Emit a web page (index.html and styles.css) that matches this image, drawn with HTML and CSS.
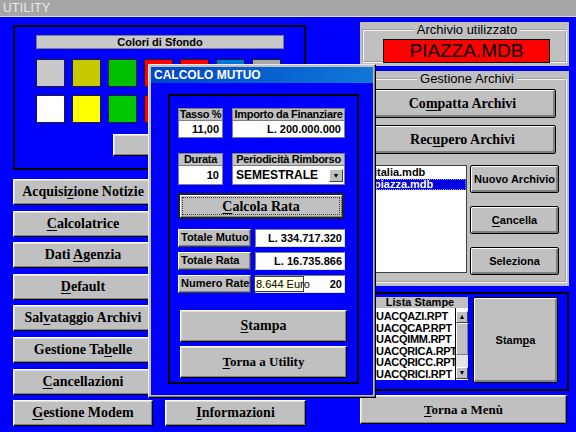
FILE: index.html
```html
<!DOCTYPE html>
<html lang="it">

<head>
   <meta charset="UTF-8">
   <title>Utility</title>
   <link rel="stylesheet" href="styles.css">
</head>

<body>
   <div class="titlebar">UTILITY</div>

   <div class="screen">
      <div class="left">
         <section class="colors">
            <div class="colors-head">Colori di Sfondo</div>
            <div class="swatches">
               <span class="swatch" style="background:#c8c8c8"></span>
               <span class="swatch" style="background:#c8c800"></span>
               <span class="swatch" style="background:#00c000"></span>
               <span class="swatch" style="background:#ff0000"></span>
               <span class="swatch" style="background:#ff0000"></span>
               <span class="swatch" style="background:#0078d8"></span>
               <span class="swatch" style="background:#a8a8a8"></span>
               <span class="swatch" style="background:#ffffff"></span>
               <span class="swatch" style="background:#ffff00"></span>
               <span class="swatch" style="background:#00c800"></span>
               <span class="swatch" style="background:#ff0000"></span>
               <span class="swatch" style="background:#ff00ff"></span>
               <span class="swatch" style="background:#00ffff"></span>
               <span class="swatch" style="background:#808080"></span>
            </div>
            <button class="btn colors-ok"></button>
         </section>

         <div class="menu">
            <button class="btn serif">Acquisi<u>z</u>ione Notizie</button>
            <button class="btn serif menu-c1"><u>C</u>alcolatrice</button>
            <button class="btn serif menu-c1">Dati <u>A</u>genzia</button>
            <button class="btn serif menu-c1"><u>D</u>efault</button>
            <button class="btn serif menu-c1">Sal<u>v</u>ataggio Archivi</button>
            <button class="btn serif menu-c1">Gestione Ta<u>b</u>elle</button>
            <button class="btn serif menu-c1"><u>C</u>ancellazioni</button>
            <button class="btn serif menu-c1"><u>G</u>estione Modem</button>
            <button class="btn serif info"><u>I</u>nformazioni</button>
         </div>
      </div>

      <div class="right">
         <div class="panel current">
            <fieldset class="group">
               <legend>Archivio utilizzato</legend>
               <div class="current-file">PIAZZA.MDB</div>
            </fieldset>
         </div>

         <div class="panel archives">
            <fieldset class="group">
               <legend>Gestione Archivi</legend>
               <button class="btn win serif wide">Co<u>m</u>patta Archivi</button>
               <button class="btn win serif wide second">Rec<u>u</u>pero Archivi</button>
               <div class="archive-row">
                  <ul class="listbox files">
                     <li>italia.mdb</li>
                     <li class="selected">piazza.mdb</li>
                  </ul>
                  <div class="archive-btns">
                     <button class="btn win small">Nuovo Archivio</button>
                     <button class="btn win small"><u>C</u>ancella</button>
                     <button class="btn win small">Seleziona</button>
                  </div>
               </div>
            </fieldset>
         </div>

         <div class="reports">
            <div class="reports-list">
               <div class="reports-head">Lista Stampe</div>
               <div class="reports-body">
                  <ul class="listbox items">
                     <li>UACQAZI.RPT</li>
                     <li>UACQCAP.RPT</li>
                     <li>UACQIMM.RPT</li>
                     <li>UACQRICA.RPT</li>
                     <li>UACQRICC.RPT</li>
                     <li>UACQRICI.RPT</li>
                  </ul>
                  <div class="scrollbar">
                     <span class="arrow">&#9650;</span>
                     <span class="thumb"></span>
                     <span class="track"></span>
                     <span class="arrow">&#9660;</span>
                  </div>
               </div>
            </div>
            <button class="btn win small print">Stam<u>p</u>a</button>
         </div>

         <button class="btn serif back"><u>T</u>orna a Menù</button>
      </div>
   </div>

   <div class="dialog">
      <div class="dialog-title">CALCOLO MUTUO</div>
      <div class="dialog-body">
         <div class="calc">
            <div class="calc-row">
               <div class="field w-small">
                  <div class="field-label">Tasso %</div>
                  <div class="field-value">11,00</div>
               </div>
               <div class="field w-big">
                  <div class="field-label">Importo da Finanziare</div>
                  <div class="field-value">L. 200.000.000</div>
               </div>
            </div>
            <div class="calc-row row2">
               <div class="field w-small">
                  <div class="field-label">Durata</div>
                  <div class="field-value tall">10</div>
               </div>
               <div class="field w-big">
                  <div class="field-label">Periodicità Rimborso</div>
                  <div class="field-value tall combo">
                     <span>SEMESTRALE</span>
                     <span class="drop">&#9660;</span>
                  </div>
               </div>
            </div>
            <button class="btn serif default"><span class="focus"><u>C</u>alcola Rata</span></button>

            <div class="result first">
               <div class="result-label">Totale Mutuo</div>
               <div class="result-value">L. 334.717.320</div>
            </div>
            <div class="result">
               <div class="result-label">Totale Rata</div>
               <div class="result-value">L. 16.735.866</div>
            </div>
            <div class="result">
               <div class="result-label">Numero Rate</div>
               <div class="result-value numero">20
                  <span class="tooltip">8.644 Euro</span>
               </div>
            </div>

            <button class="btn serif big first-big"><u>S</u>tampa</button>
            <button class="btn serif big torna"><u>T</u>orna a Utility</button>
         </div>
      </div>
   </div>
</body>

</html>
```

FILE: styles.css
```css
* {
   margin: 0;
   padding: 0;
   box-sizing: border-box;
}

body {
   width: 576px;
   height: 432px;
   overflow: hidden;
   position: relative;
   background: #0000ff;
   font-family: "Liberation Sans", Arial, sans-serif;
   color: #000;
}

ul {
   list-style: none;
}

.titlebar {
   height: 17px;
   background: #a6a6a6;
   border-bottom: 1px solid #dcdcdc;
   color: #ececec;
   font-size: 12px;
   line-height: 16px;
   padding-left: 3px;
   letter-spacing: 0.4px;
}

.screen {
   display: grid;
   grid-template-columns: 293px 209px;
   column-gap: 54px;
   padding: 5px 0 0 13px;
}

/* buttons */
.btn {
   display: block;
   background: #c0c0c0;
   border: 1px solid;
   border-color: #fff #000 #000 #fff;
   box-shadow: inset -1px -1px 0 #808080, inset 1px 1px 0 #dfdfdf;
   font-family: "Liberation Sans", Arial, sans-serif;
   color: #000;
   cursor: pointer;
}

.btn u {
   text-decoration-thickness: 1px;
   text-underline-offset: 2px;
}

.btn.win {
   border: 1px solid #000;
   border-radius: 2px;
   box-shadow: inset 1px 1px 0 #fff, inset -1px -1px 0 #808080, inset -2px -2px 0 #808080;
}

.serif {
   font-family: "Liberation Serif", "Times New Roman", serif;
   font-weight: bold;
   font-size: 14px;
}

/* left side */
.left {
   margin-top: 3px;
}

.colors {
   height: 145px;
   border: 2px solid #000;
   padding: 8px 0 0 21px;
}

.colors-head {
   width: 248px;
   height: 14px;
   background: #c8c8c8;
   border: 1px solid #808080;
   font-size: 11px;
   font-weight: bold;
   line-height: 12px;
   text-align: center;
}

.swatches {
   display: grid;
   grid-template-columns: repeat(7, 29px);
   grid-auto-rows: 28px;
   gap: 8px 7px;
   margin-top: 10px;
}

.swatch {
   border: 1px solid #202020;
}

.colors-ok {
   width: 93px;
   height: 22px;
   margin: 11px 0 0 77px;
}

.menu {
   display: grid;
   grid-template-columns: 140px 141px;
   grid-auto-rows: 26px;
   column-gap: 12px;
   row-gap: 5.6px;
   margin-top: 9px;
}

.menu-c1 {
   grid-column: 1;
}

.info {
   grid-column: 2;
   grid-row: 8;
}

/* right side */
.right {
   display: flex;
   flex-direction: column;
}

.panel {
   background: #c0c0c0;
   padding: 1px 2px 3px;
}

.current {
   height: 44px;
}

.archives {
   height: 215px;
   margin-top: 5px;
}

.group {
   height: 100%;
   border: 2px groove #f4f4f4;
   padding: 0 0 0 5px;
}

.group legend {
   margin: 0 auto;
   padding: 0 3px;
   font-size: 13px;
   line-height: 14px;
}

.current-file {
   width: 167px;
   height: 24px;
   margin: 2px 0 0 14px;
   background: #ff0000;
   border: 1px solid #000;
   font-size: 19px;
   line-height: 22px;
   text-align: center;
}

.wide {
   width: 187px;
   height: 29px;
   margin-top: 3px;
}

.wide.second {
   margin-top: 7px;
}

.archive-row {
   display: flex;
   gap: 3px;
   margin-top: 11px;
}

.listbox {
   background: #fff;
   font-size: 11px;
   font-weight: bold;
   overflow: hidden;
   white-space: nowrap;
}

.files {
   width: 98px;
   height: 108px;
   border: 1px solid #404040;
   padding: 1px 0 0 4px;
   line-height: 11.5px;
}

.files .selected {
   background: #0000e0;
   color: #fff;
   margin-left: -4px;
   padding-left: 4px;
   outline: 1px dotted #9090ff;
   outline-offset: -1px;
}

.archive-btns {
   display: flex;
   flex-direction: column;
   gap: 13px;
}

.small {
   width: 89px;
   height: 28px;
   font-size: 11px;
   font-weight: bold;
}

.reports {
   height: 99px;
   margin-top: 6px;
   border: 2px solid #000;
   display: flex;
   gap: 5px;
   padding: 3px 0 0 10px;
}

.reports-list {
   width: 96px;
}

.reports-head {
   height: 11px;
   background: #c0c0c0;
   font-size: 11px;
   font-weight: bold;
   line-height: 11px;
   text-align: center;
}

.reports-body {
   display: flex;
   height: 72px;
}

.items {
   flex: 1;
   padding: 3px 0 0 4px;
   line-height: 11.6px;
   letter-spacing: -0.3px;
}

.scrollbar {
   width: 13px;
   display: flex;
   flex-direction: column;
   background: #fff;
   border-left: 1px solid #000;
}

.arrow {
   height: 12px;
   margin-top: 3px;
   background: #c0c0c0;
   border: 1px solid;
   border-color: #fff #404040 #404040 #fff;
   font-size: 7px;
   line-height: 10px;
   text-align: center;
}

.arrow:last-child {
   margin: 0 0 1px;
}

.thumb {
   height: 32px;
   background: #c0c0c0;
   border: 1px solid;
   border-color: #fff #808080 #808080 #fff;
}

.track {
   flex: 1;
   background: #e4e4e4;
}

.print {
   width: 85px;
   height: 86px;
}

.back {
   width: 207px;
   height: 29px;
   margin-top: 4px;
   font-size: 13px;
}

/* dialog */
.dialog {
   position: absolute;
   left: 148px;
   top: 64px;
   width: 228px;
   height: 334px;
   background: #c0c0c0;
   border: 1px solid;
   border-color: #e8e8e8 #000 #000 #e8e8e8;
   box-shadow: inset -1px -1px 0 #808080;
   padding: 2px;
   display: flex;
   flex-direction: column;
}

.dialog-title {
   height: 16px;
   background: linear-gradient(to right, #0046c4, #1078d8);
   color: #fff;
   font-size: 12px;
   font-weight: bold;
   line-height: 16px;
   padding-left: 3px;
}

.dialog-body {
   flex: 1;
   background: #0000ff;
   padding: 11px 0 0 17px;
}

.calc {
   width: 191px;
   height: 290px;
   border: 2px solid #000;
   padding: 12px 0 0 8px;
}

.calc-row {
   display: flex;
   gap: 9px;
}

.row2 {
   margin-top: 15px;
}

.field {
   border: 1px solid #808080;
   background: #fff;
}

.w-small {
   width: 45px;
}

.w-big {
   width: 113px;
}

.field-label {
   height: 12px;
   background: #c0c0c0;
   border-bottom: 1px solid #808080;
   font-size: 11px;
   font-weight: bold;
   line-height: 11px;
   text-align: center;
   white-space: nowrap;
   letter-spacing: -0.3px;
}

.field-value {
   height: 16px;
   padding-right: 3px;
   font-size: 11px;
   font-weight: bold;
   line-height: 17px;
   text-align: right;
}

.field-value.tall {
   height: 18px;
   line-height: 18px;
}

.combo {
   display: flex;
   justify-content: space-between;
   align-items: center;
   padding: 0 1px 0 3px;
   font-size: 12px;
}

.drop {
   width: 14px;
   height: 13px;
   background: #c0c0c0;
   border: 1px solid;
   border-color: #fff #404040 #404040 #fff;
   font-size: 7px;
   line-height: 11px;
   text-align: center;
}

.default {
   width: 166px;
   height: 26px;
   margin-top: 8px;
   border: 2px solid #202020;
   padding: 2px;
   box-shadow: inset 1px 1px 0 #fff, inset -1px -1px 0 #808080;
}

.focus {
   display: block;
   height: 100%;
   border: 1px dotted #404040;
   line-height: 18px;
}

.result {
   display: flex;
   gap: 4px;
   height: 18px;
   margin-top: 5px;
}

.result.first {
   margin-top: 10px;
}

.result-label {
   width: 73px;
   background: #c0c0c0;
   border: 1px solid;
   border-color: #fff #404040 #404040 #fff;
   box-shadow: inset -1px -1px 0 #808080;
   font-size: 11px;
   font-weight: bold;
   line-height: 14px;
   padding-left: 2px;
}

.result-value {
   position: relative;
   width: 90px;
   background: #fff;
   border: 1px solid;
   border-color: #808080 #e0e0e0 #e0e0e0 #808080;
   font-size: 11px;
   font-weight: bold;
   line-height: 16px;
   text-align: right;
   padding-right: 2px;
}

.tooltip {
   position: absolute;
   left: -2px;
   top: 0;
   width: 50px;
   height: 16px;
   background: #ffffe1;
   border: 1px solid #404040;
   font-size: 11px;
   font-weight: normal;
   line-height: 14px;
   text-align: left;
   padding-left: 1px;
   white-space: nowrap;
}

.big {
   width: 167px;
   height: 32px;
   margin-left: 2px;
}

.first-big {
   margin-top: 17px;
}

.torna {
   margin-top: 4px;
   font-size: 13px;
}
```
